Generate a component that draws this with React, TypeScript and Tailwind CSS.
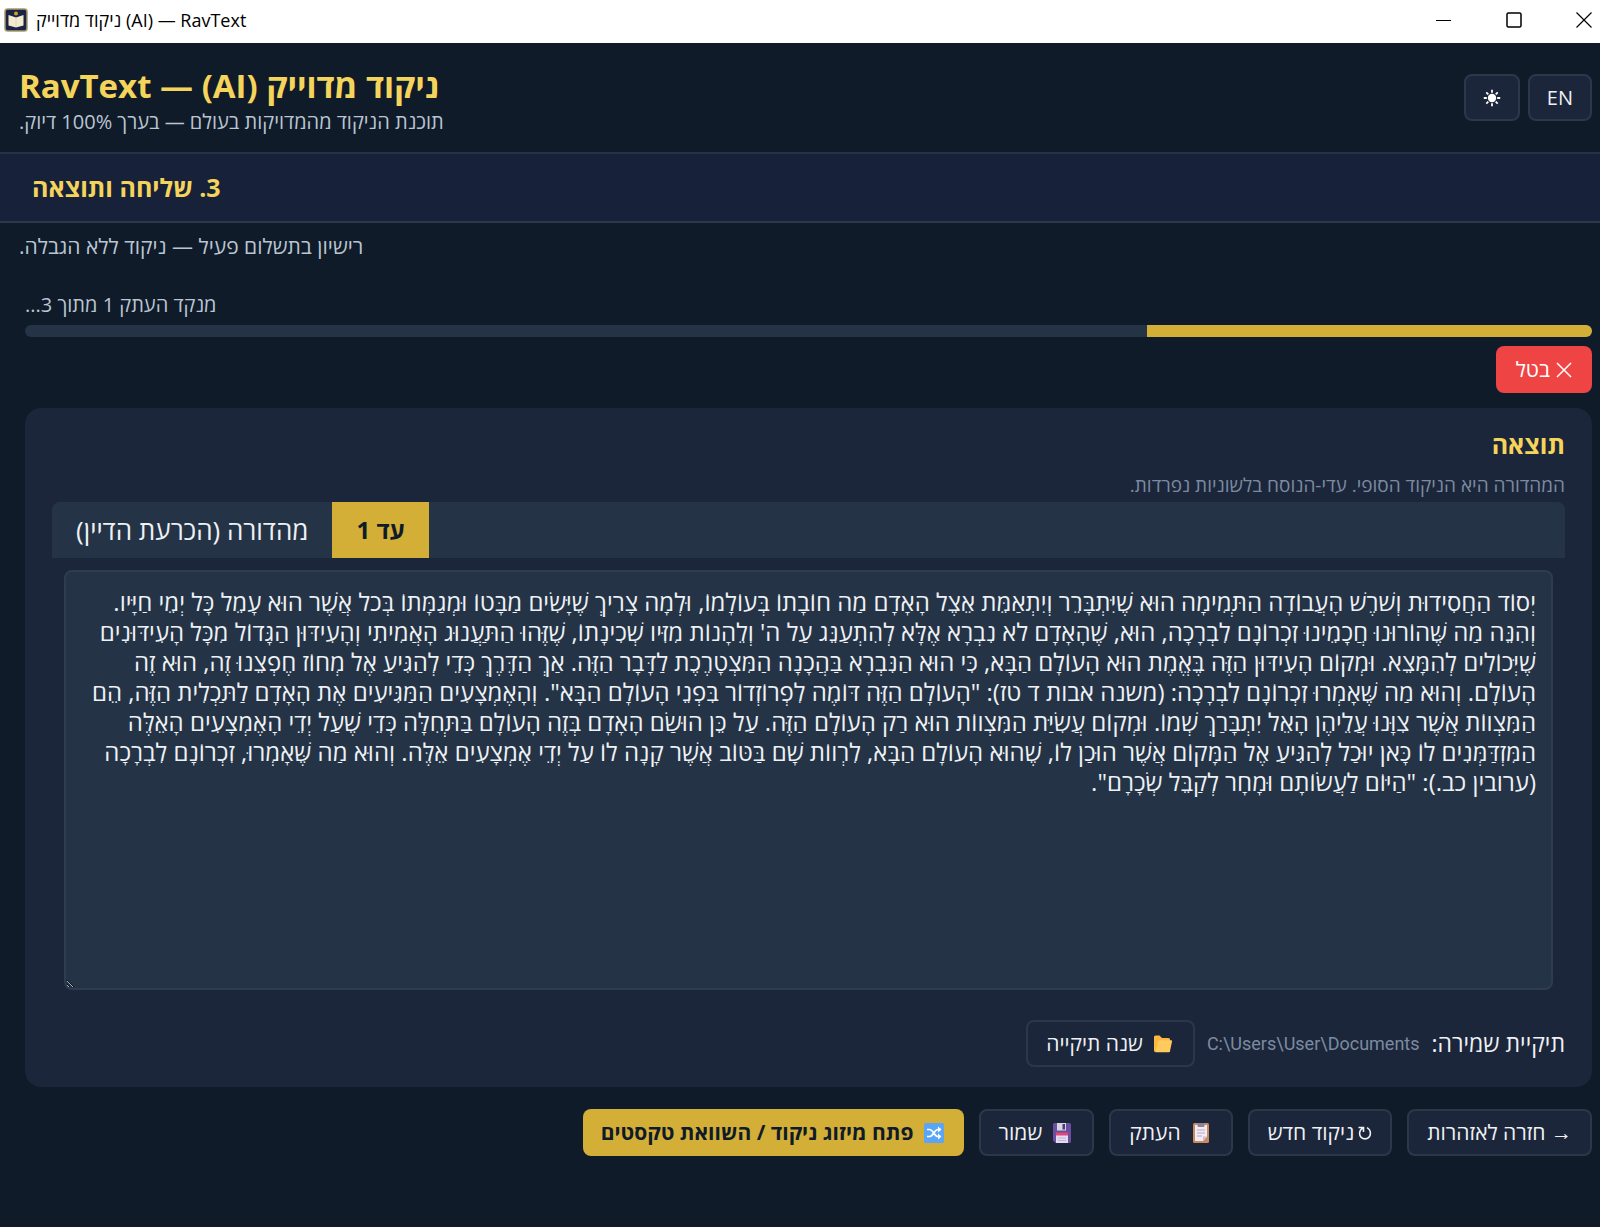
import React, { useState } from "react";

const RESULT_TEXT = [
  "יְסוֹד הַחֲסִידוּת וְשֹׁרֶשׁ הָעֲבוֹדָה הַתְּמִימָה הוּא שֶׁיִּתְבָּרֵר וְיִתְאַמֵּת אֵצֶל הָאָדָם מַה חוֹבָתוֹ בְּעוֹלָמוֹ, וּלְמָה צָרִיךְ שֶׁיָּשִׂים מַבָּטוֹ וּמְגַמָּתוֹ בְּכֹל אֲשֶׁר הוּא עָמֵל כָּל יְמֵי חַיָּיו.",
  "וְהִנֵּה מַה שֶּׁהוֹרוּנוּ חֲכָמֵינוּ זִכְרוֹנָם לִבְרָכָה, הוּא, שֶׁהָאָדָם לֹא נִבְרָא אֶלָּא לְהִתְעַנֵּג עַל ה' וְלֵהָנוֹת מִזִּיו שְׁכִינָתוֹ, שֶׁזֶּהוּ הַתַּעֲנוּג הָאֲמִיתִי וְהָעִידּוּן הַגָּדוֹל מִכָּל הָעִידּוּנִים",
  "שֶׁיְּכוֹלִים לְהִמָּצֵא. וּמְקוֹם הָעִידּוּן הַזֶּה בֶּאֱמֶת הוּא הָעוֹלָם הַבָּא, כִּי הוּא הַנִּבְרָא בַּהֲכָנָה הַמִּצְטָרֶכֶת לַדָּבָר הַזֶּה. אַךְ הַדֶּרֶךְ כְּדֵי לְהַגִּיעַ אֶל מְחוֹז חֶפְצֵנוּ זֶה, הוּא זֶה",
  "הָעוֹלָם. וְהוּא מַה שֶּׁאָמְרוּ זִכְרוֹנָם לִבְרָכָה: (משנה אבות ד טז): \"הָעוֹלָם הַזֶּה דּוֹמֶה לִפְרוֹזְדוֹר בִּפְנֵי הָעוֹלָם הַבָּא\". וְהָאֶמְצָעִים הַמַּגִּיעִים אֶת הָאָדָם לַתַּכְלִית הַזֶּה, הֵם",
  "הַמִּצְווֹת אֲשֶׁר צִוָּנוּ עֲלֵיהֶן הָאֵל יִתְבָּרַךְ שְׁמוֹ. וּמְקוֹם עֲשִׂיַּת הַמִּצְווֹת הוּא רַק הָעוֹלָם הַזֶּה. עַל כֵּן הוּשַׂם הָאָדָם בְּזֶה הָעוֹלָם בַּתְּחִלָּה כְּדֵי שֶׁעַל יְדֵי הָאֶמְצָעִים הָאֵלֶּה",
  "הַמִּזְדַּמְּנִים לוֹ כָּאן יוּכַל לְהַגִּיעַ אֶל הַמָּקוֹם אֲשֶׁר הוּכַן לוֹ, שֶׁהוּא הָעוֹלָם הַבָּא, לִרְווֹת שָׁם בַּטּוֹב אֲשֶׁר קָנָה לוֹ עַל יְדֵי אֶמְצָעִים אֵלֶּה. וְהוּא מַה שֶּׁאָמְרוּ, זִכְרוֹנָם לִבְרָכָה",
  "(ערובין כב.): \"הַיּוֹם לַעֲשׂוֹתָם וּמָחָר לְקַבֵּל שְׂכָרָם\".",
].join("\n");

const AppIcon = () => (
  <svg width="24" height="24" viewBox="0 0 24 24">
    <rect x="1" y="1" width="22" height="22" rx="2.500" fill="#1b2444" stroke="#a89a72" strokeWidth="1.500" />
    <path d="M4.500 7l7.500 2.500L19.500 7v10.500L12 19.500l-7.500-2z" fill="#f3ead0" />
    <path d="M12 9.500v9.500" stroke="#e2d7b8" strokeWidth="1" />
    <circle cx="12" cy="5.500" r="2" fill="#c9a227" />
  </svg>
);

const SunIcon = () => (
  <svg width="18" height="18" viewBox="0 0 18 18" stroke="#fff" strokeWidth="1.800">
    <circle cx="9" cy="9" r="4.200" fill="#fff" stroke="none" />
    <path d="M9 .8v3M9 14.200v3M.8 9h3M14.200 9h3M3.300 3.300l2 2M12.700 12.700l2 2M3.300 14.700l2-2M12.700 5.300l2-2" />
  </svg>
);

const CrossIcon = () => (
  <svg width="16" height="16" viewBox="0 0 16 16" stroke="#fff" strokeWidth="1.500">
    <path d="M1 1l14 14M15 1L1 15" />
  </svg>
);

const FolderIcon = () => (
  <svg width="24" height="20" viewBox="-2 0 24 20">
    <path d="M1 3a1.500 1.500 0 0 1 1.500-1.500h4L9 4h6.500A1.500 1.500 0 0 1 17 5.500V18H2.500A1.500 1.500 0 0 1 1 16.500z" fill="#ffb83d" />
    <path d="M5.200 7.500A1.500 1.500 0 0 1 6.700 6.300H18a1 1 0 0 1 1 1.300l-2 9.400a1.500 1.500 0 0 1-1.500 1.300H2.500z" fill="#ffca5e" />
  </svg>
);

const ClipboardIcon = () => (
  <svg width="24" height="22" viewBox="-2 0 24 22">
    <rect x="2" y="1" width="16" height="20" rx="1.500" fill="#c98a5e" />
    <path d="M4 3h12v11.500L12 19H4z" fill="#f1ebf5" />
    <path d="M16 14.500h-4V19z" fill="#c9bfd3" />
    <rect x="6.500" y="1" width="7" height="4" rx="1" fill="#8a8493" />
    <path d="M6 8h8M6 11h8M6 14h5" stroke="#b5aabf" strokeWidth="1" />
  </svg>
);

const FloppyIcon = () => (
  <svg width="24" height="22" viewBox="-2 0 24 22">
    <path d="M1 2.500A1.500 1.500 0 0 1 2.500 1h15A1.500 1.500 0 0 1 19 2.500v17a1.500 1.500 0 0 1-1.500 1.500h-14L1 18.500z" fill="#6b4f9e" />
    <path d="M5 1h9v7.500H5z" fill="#d9d3e6" />
    <path d="M10.500 2h2.500v5.500h-2.500z" fill="#4a3a78" />
    <path d="M4 11h12v10H4z" fill="#e3dbf0" />
    <path d="M4 10.500h12v3H4z" fill="#e0487a" />
    <path d="M6 16h8M6 18.500h8" stroke="#c3b6dc" strokeWidth="1" />
  </svg>
);

const ShuffleIcon = () => (
  <svg width="24" height="20" viewBox="-2 0 24 20" fill="none">
    <rect width="20" height="20" rx="1.500" fill="#5aa5f5" />
    <path d="M3 6.500h2.500c4 0 4.500 7 8.500 7h2.500M3 13.500h2.500c4 0 4.500-7 8.500-7h2.500" stroke="#fff" strokeWidth="1.700" />
    <path d="M14 3.500l3.500 3-3.500 3zM14 10.500l3.500 3-3.500 3z" fill="#fff" />
  </svg>
);

const RedoIcon = () => (
  <svg width="14" height="14" viewBox="0 0 14 14" fill="none" stroke="#eef1f5" strokeWidth="1.600">
    <path d="M.5 1.500h5v4.500M5.300 1.800C3 3 1.600 5 1.600 7.500a5.400 5.400 0 0 0 10.800 0c0-2.600-1.400-4.800-3.400-5.900" />
  </svg>
);

interface ButtonProps {
  children: React.ReactNode;
  icon?: React.ReactNode;
  label?: string;
}

const ToolButton = ({ children, label }: ButtonProps) => (
  <button
    type="button"
    aria-label={label}
    className="flex h-[47px] items-center rounded-lg border-2 border-[#2a384a] bg-[#1c263a] px-[17px] text-xl"
  >
    {children}
  </button>
);

const DarkButton = ({ children, icon }: ButtonProps) => (
  <button
    type="button"
    className="flex h-[47px] items-center gap-2 rounded-lg border-2 border-[#2a384a] bg-[#1c263a] px-[18px] text-[21px]"
  >
    {icon}
    {children}
  </button>
);

const App = () => {
  const [text, setText] = useState(RESULT_TEXT);
  const progress = 28.4;

  return (
    <div className="flex min-h-screen flex-col bg-[#0f1b29] font-['Open_Sans','Noto_Sans',sans-serif] text-[#eef1f5]">
      {/* Window title bar */}
      <div className="flex h-[43px] items-center justify-between bg-white pr-2 pb-1 pl-1 text-black">
        <div className="flex items-center gap-2">
          <AppIcon />
          <span className="text-lg">ניקוד מדוייק (AI) — RavText</span>
        </div>
        <div className="flex items-center gap-[54px]">
          <button type="button" aria-label="Minimize">
            <svg width="16" height="16" viewBox="0 0 16 16" stroke="#000">
              <path d="M0 8.500h15" />
            </svg>
          </button>
          <button type="button" aria-label="Maximize">
            <svg width="16" height="16" viewBox="0 0 16 16" fill="none" stroke="#000" strokeWidth="1.500">
              <rect x="1" y="1" width="14" height="14" rx="1.500" />
            </svg>
          </button>
          <button type="button" aria-label="Close">
            <svg width="16" height="16" viewBox="0 0 16 16" stroke="#000" strokeWidth="1.200">
              <path d="M0.500 0.500l15 15M15.500 0.500l-15 15" />
            </svg>
          </button>
        </div>
      </div>

      <div dir="rtl" className="flex flex-col">
        <header className="flex h-[111px] items-center justify-between border-b-2 border-[#253346] pr-2 pl-[19px]">
          <div className="flex gap-2">
            <ToolButton>EN</ToolButton>
            <ToolButton label="מצב בהיר">
              <SunIcon />
            </ToolButton>
          </div>
          <div className="pt-2 text-left">
            <h1 className="text-[33px] leading-10 font-bold text-[#f5d45b]">
              ניקוד מדוייק (AI) — RavText
            </h1>
            <p className="text-xl leading-8 text-[#bac5d2]">
              תוכנת הניקוד מהמדויקות בעולם — בערך 100% דיוק.
            </p>
          </div>
        </header>

        {/* Current step */}
        <div className="flex h-[69px] items-center justify-end border-b-2 border-[#2a384a] bg-[#17223a] px-8">
          <h2 className="text-[25px] font-bold text-[#f5d45b]">3. שליחה ותוצאה</h2>
        </div>

        <p className="mt-2 pl-[19px] text-left text-[21px] leading-[30px] text-[#bac5d2]">
          רישיון בתשלום פעיל — ניקוד ללא הגבלה.
        </p>

        <main className="mt-[30px] flex flex-col pr-2 pl-[25px]">
          <p className="text-left text-xl leading-7 text-[#bac5d2]">מנקד העתק 1 מתוך 3...</p>
          <div className="mt-1.5 h-3 overflow-hidden rounded-full bg-[#243446]">
            <div className="h-full bg-[#d4af37]" style={{ width: `${progress}%` }} />
          </div>
          <button
            type="button"
            className="mt-[9px] flex h-[47px] items-center gap-1.5 self-start rounded-lg bg-[#ef4444] px-5 text-[21px] text-white"
          >
            <CrossIcon />
            בטל
          </button>

          {/* Result card */}
          <section className="mt-[15px] flex flex-col rounded-2xl bg-[#1c263a] px-[27px] pt-[18px] pb-5">
            <h2 className="text-[25px] leading-9 font-bold text-[#f5d45b]">תוצאה</h2>
            <p className="mt-2 text-[19px] leading-[30px] text-[#7b8ba1]">
              המהדורה היא הניקוד הסופי. עדי-הנוסח בלשוניות נפרדות.
            </p>
            <div className="mt-0.5 flex h-14 justify-end rounded-t-lg bg-[#243446]">
              <button type="button" className="bg-[#d4af37] px-6 text-2xl font-bold text-[#0f1b29]">
                עד 1
              </button>
              <button type="button" className="px-6 text-[26px]">
                מהדורה (הכרעת הדיין)
              </button>
            </div>
            <textarea
              aria-label="תוצאה"
              value={text}
              onChange={(e) => setText(e.target.value)}
              className="mx-3 mt-3 h-[420px] resize rounded-lg border-2 border-[#2d3c4f] bg-[#243446] px-[15px] py-[15px] text-2xl leading-[30px] outline-none"
            />
            <div className="mt-[30px] flex items-center gap-3">
              <span className="text-[23px]">תיקיית שמירה:</span>
              <span dir="ltr" className="font-['Roboto',sans-serif] text-lg text-[#7b8ba1]">
                C:\Users\User\Documents
              </span>
              <DarkButton icon={<FolderIcon />}>שנה תיקייה</DarkButton>
            </div>
          </section>

          <div className="mt-[22px] flex flex-wrap gap-[15px]">
            <DarkButton>→ חזרה לאזהרות</DarkButton>
            <DarkButton>
              <span className="flex items-center gap-1">
                <RedoIcon />
                ניקוד חדש
              </span>
            </DarkButton>
            <DarkButton icon={<ClipboardIcon />}>העתק</DarkButton>
            <DarkButton icon={<FloppyIcon />}>שמור</DarkButton>
            <button
              type="button"
              className="flex h-[47px] items-center gap-2 rounded-lg bg-[#d4af37] px-[18px] text-[21px] font-bold text-[#0f1b29]"
            >
              <ShuffleIcon />
              פתח מיזוג ניקוד / השוואת טקסטים
            </button>
          </div>
        </main>
      </div>
    </div>
  );
};

export default App;
